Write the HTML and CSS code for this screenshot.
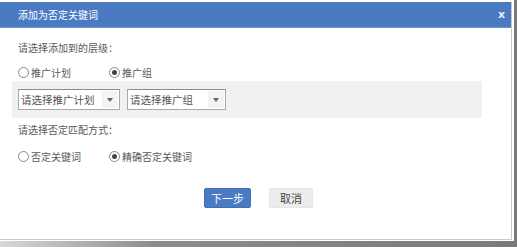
FILE: index.html
```html
<!DOCTYPE html>
<html lang="zh">

<head>
    <meta charset="UTF-8">
    <title>添加为否定关键词</title>
    <link rel="stylesheet" href="styles.css">
</head>

<body>
    <div class="frame">
        <div class="dialog">
            <div class="head">
                <span class="title">添加为否定关键词</span>
                <span class="close">x</span>
            </div>
            <div class="body">
                <p class="label">请选择添加到的层级：</p>
                <div class="radios">
                    <label class="radio"><span class="dot"></span>推广计划</label>
                    <label class="radio on"><span class="dot"></span>推广组</label>
                </div>
                <div class="panel">
                    <div class="select plan"><span class="text">请选择推广计划</span><span class="arrow"></span></div>
                    <div class="select group"><span class="text">请选择推广组</span><span class="arrow"></span></div>
                </div>
                <p class="label second">请选择否定匹配方式：</p>
                <div class="radios">
                    <label class="radio"><span class="dot"></span>否定关键词</label>
                    <label class="radio on"><span class="dot"></span>精确否定关键词</label>
                </div>
                <div class="actions">
                    <button class="btn primary">下一步</button>
                    <button class="btn">取消</button>
                </div>
            </div>
        </div>
    </div>
</body>

</html>
```

FILE: styles.css
```css
body {
    margin: 0;
    width: 517px;
    height: 247px;
    overflow: hidden;
    background: linear-gradient(90deg, #d8d8d8 0%, #8c8c8c 30%, #7a7a7a 100%);
    font-family: "Noto Sans CJK SC", "Noto Sans", sans-serif;
    font-size: 10px;
    color: #5a5a5a;
    white-space: nowrap;
}

.frame {
    width: 514px;
    height: 241px;
    padding-top: 2px;
    box-sizing: border-box;
    background: #fff;
}

.dialog {
    width: 512px;
    height: 238px;
    border-right: 1px solid #c9c9c9;
    border-bottom: 1px solid #c9c9c9;
    box-sizing: border-box;
}

.head {
    display: flex;
    align-items: center;
    justify-content: space-between;
    height: 25px;
    padding: 0 6px 0 18px;
    background: #4a7bc2;
    border-bottom: 1px solid #6d95cf;
    color: #fff;
}

.title {
    font-size: 10px;
}

.close {
    font-size: 11px;
    font-family: "DejaVu Sans", sans-serif;
    font-weight: bold;
    color: #e8eefa;
}

.body {
    padding-top: 11px;
}

.label {
    margin: 0;
    padding-left: 18px;
    height: 18px;
    line-height: 18px;
}

.label.second {
    margin-top: 3px;
}

.radios {
    display: flex;
    height: 17px;
    margin-top: 7px;
    padding-left: 18px;
}

.panel + .label + .radios {
    margin-top: 9px;
}

.radio {
    display: flex;
    align-items: center;
    width: 91px;
    line-height: 17px;
}

.dot {
    position: relative;
    width: 11px;
    height: 11px;
    margin-right: 2px;
    border: 1px solid #888;
    border-radius: 50%;
    box-sizing: border-box;
    background: #fff;
}

.radio.on .dot::after {
    content: "";
    position: absolute;
    left: 2px;
    top: 2px;
    width: 5px;
    height: 5px;
    border-radius: 50%;
    background: #444;
}

.panel {
    display: flex;
    align-items: center;
    gap: 7px;
    width: 470px;
    height: 37px;
    margin-left: 12px;
    padding-left: 6px;
    box-sizing: border-box;
    background: #f1f1f1;
}

.select {
    display: flex;
    align-items: center;
    justify-content: space-between;
    height: 21px;
    border: 1px solid #a9a9a9;
    border-top-color: #8a8a8a;
    box-sizing: border-box;
    background: #fff;
    color: #555;
    font-size: 10.5px;
}

.select.plan {
    width: 102px;
}

.select.group {
    width: 99px;
}

.text {
    padding-left: 2px;
}

.arrow {
    position: relative;
    width: 16px;
    height: 17px;
    margin-right: 1px;
    background: #f4f4f4;
}

.arrow::after {
    content: "";
    position: absolute;
    left: 5px;
    top: 7px;
    border-left: 3px solid transparent;
    border-right: 3px solid transparent;
    border-top: 4px solid #666;
}

.actions {
    display: flex;
    gap: 18px;
    margin-top: 23px;
    padding-left: 204px;
}

.btn {
    height: 20px;
    padding: 0 10px;
    border: 1px solid #e6e6e6;
    border-radius: 2px;
    background: #ececec;
    font-family: inherit;
    font-size: 11px;
    color: #444;
}

.btn.primary {
    width: 47px;
    padding: 0;
    border-color: #3f6fb5;
    background: #4a7bc2;
    color: #fff;
}
```
